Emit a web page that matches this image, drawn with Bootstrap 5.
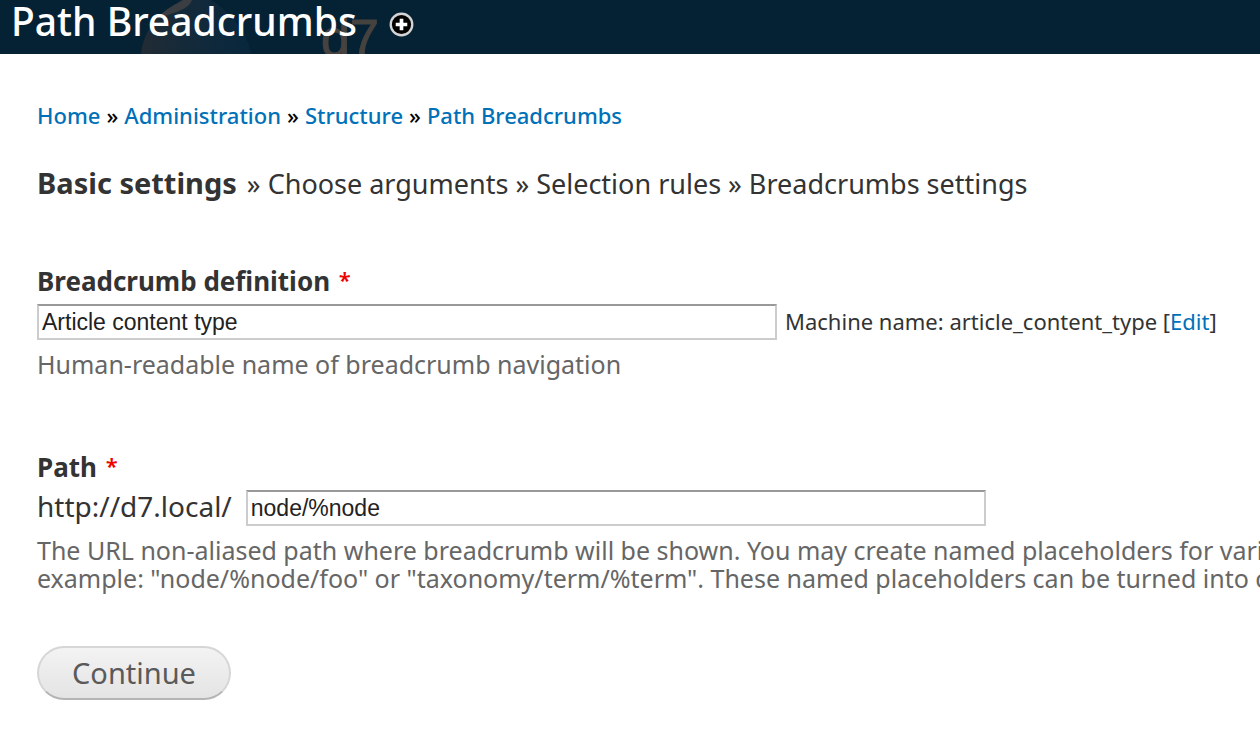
<!DOCTYPE html>
<html lang="en">
<head>
<meta charset="utf-8">
<meta name="viewport" content="width=device-width, initial-scale=1">
<title>Path Breadcrumbs</title>
<link href="https://cdn.jsdelivr.net/npm/bootstrap@5.3.0/dist/css/bootstrap.min.css" rel="stylesheet">
<style>
  body { font-family: "Noto Sans", "Open Sans", sans-serif; font-size: 27px; line-height: 28px; color: #333; background: #fff; }
  a { color: #0071b8; text-decoration: none; }
  a:hover { text-decoration: underline; }
  .branding { background: #052235; height: 54px; padding-left: 11px; gap: 32px; }
  .branding h1 { font-size: 39px; line-height: 42px; font-weight: 500; color: #fff; z-index: 1; }
  .ghost { position: absolute; left: 140px; top: 0; width: 250px; height: 54px; }
  .plus { z-index: 1; }
  .main-area { padding: 47px 0 0 37px; }
  .trail { font-size: 22px; font-weight: 500; --bs-breadcrumb-divider: "»"; --bs-breadcrumb-divider-color: #000; --bs-breadcrumb-item-padding-x: 6px; margin-bottom: 40px; }
  .steps { margin-bottom: 68px; }
  .steps b { font-size: 29px; margin-right: 3px; }
  .form-label { font-size: 26px; font-weight: 700; margin-bottom: 8px; line-height: 30px; display: block; }
  .required { color: #e00; font-size: 22px; font-weight: 600; line-height: 1; vertical-align: 3px; margin-left: 2px; }
  .form-control { flex: none; width: 740px; height: 36px; padding: 0 3px; border: 2px solid #ccc; border-top-color: #999; border-radius: 0; font: 23px/32px "Liberation Sans", Arial, sans-serif; color: #222; }
  .form-text { font-size: 25px; color: #666; margin-top: 10px; }
  .field-block { margin-bottom: 74px; }
  .base-row { gap: 14px; }
  .base-url { font-size: 28px; line-height: 24px; padding-bottom: 4px; }
  .suffix { font-size: 22px; line-height: 24px; padding-bottom: 2px; }
  .actions { margin-top: 54px; }
  .btn-continue { width: 194px; height: 54px; padding: 0; border: 2px solid #d6d6d6; border-bottom-color: #b4b4b4; border-radius: 27px; background: linear-gradient(#f3f3f3, #e4e4e4); color: #5a5a5a; font-size: 29px; line-height: 50px; }
</style>
</head>
<body class="overflow-hidden">
<header class="branding position-relative overflow-hidden d-flex align-items-start">
  <svg class="ghost" viewBox="0 0 250 54" aria-hidden="true">
    <defs><linearGradient id="drop" x1="0" x2="1"><stop offset="0" stop-color="#222b34"/><stop offset=".4" stop-color="#142a3a"/><stop offset="1" stop-color="#08273d"/></linearGradient></defs>
    <path d="M1 54C3 36 11 23 24 12 31 7 37 4 41 0h30c12 8 22 17 30 30 6 9 9 16 10 24z" fill="url(#drop)"/>
    <path d="M17 19C27 7 37 4 43 0h9c-2 5-6 8-13 11-8 3-14 5-22 8z" fill="#3a3d41"/>
    <text x="181" y="56" font-family="Liberation Sans" font-size="52" fill="#45423f" stroke="#45423f">d7</text>
  </svg>
  <h1 class="m-0 position-relative">Path Breadcrumbs</h1>
  <button type="button" class="btn p-0 border-0 plus position-relative d-flex mt-2 pt-1" aria-label="Add to shortcuts">
    <svg width="25" height="25" viewBox="0 0 26 26"><circle cx="13" cy="13" r="11.2" fill="#000" stroke="#d4d4d4" stroke-width="2.4"/><path d="M13 7v12M7 13h12" stroke="#fff" stroke-width="3.8"/></svg>
  </button>
</header>
<main class="main-area text-nowrap">
  <nav aria-label="Breadcrumb">
    <ol class="breadcrumb trail flex-nowrap">
      <li class="breadcrumb-item"><a href="#">Home</a></li>
      <li class="breadcrumb-item"><a href="#">Administration</a></li>
      <li class="breadcrumb-item"><a href="#">Structure</a></li>
      <li class="breadcrumb-item"><a href="#">Path Breadcrumbs</a></li>
    </ol>
  </nav>
  <div class="steps"><b>Basic settings</b> » Choose arguments » Selection rules » Breadcrumbs settings</div>
  <form>
    <div class="field-block">
      <label class="form-label" for="name">Breadcrumb definition <span class="required">*</span></label>
      <div class="d-flex align-items-center gap-2">
        <input class="form-control" id="name" type="text" value="Article content type">
        <span class="suffix">Machine name: article_content_type [<a href="#">Edit</a>]</span>
      </div>
      <div class="form-text">Human-readable name of breadcrumb navigation</div>
    </div>
    <div>
      <label class="form-label" for="path">Path <span class="required">*</span></label>
      <div class="base-row d-flex align-items-center">
        <span class="base-url">http://d7.local/</span>
        <input class="form-control" id="path" type="text" value="node/%node">
      </div>
      <div class="form-text">The URL non-aliased path where breadcrumb will be shown. You may create named placeholders for vari<br>example: "node/%node/foo" or "taxonomy/term/%term". These named placeholders can be turned into co</div>
    </div>
    <div class="actions"><button type="submit" class="btn btn-continue">Continue</button></div>
  </form>
</main>
<script src="https://cdn.jsdelivr.net/npm/bootstrap@5.3.0/dist/js/bootstrap.bundle.min.js"></script>
</body>
</html>
